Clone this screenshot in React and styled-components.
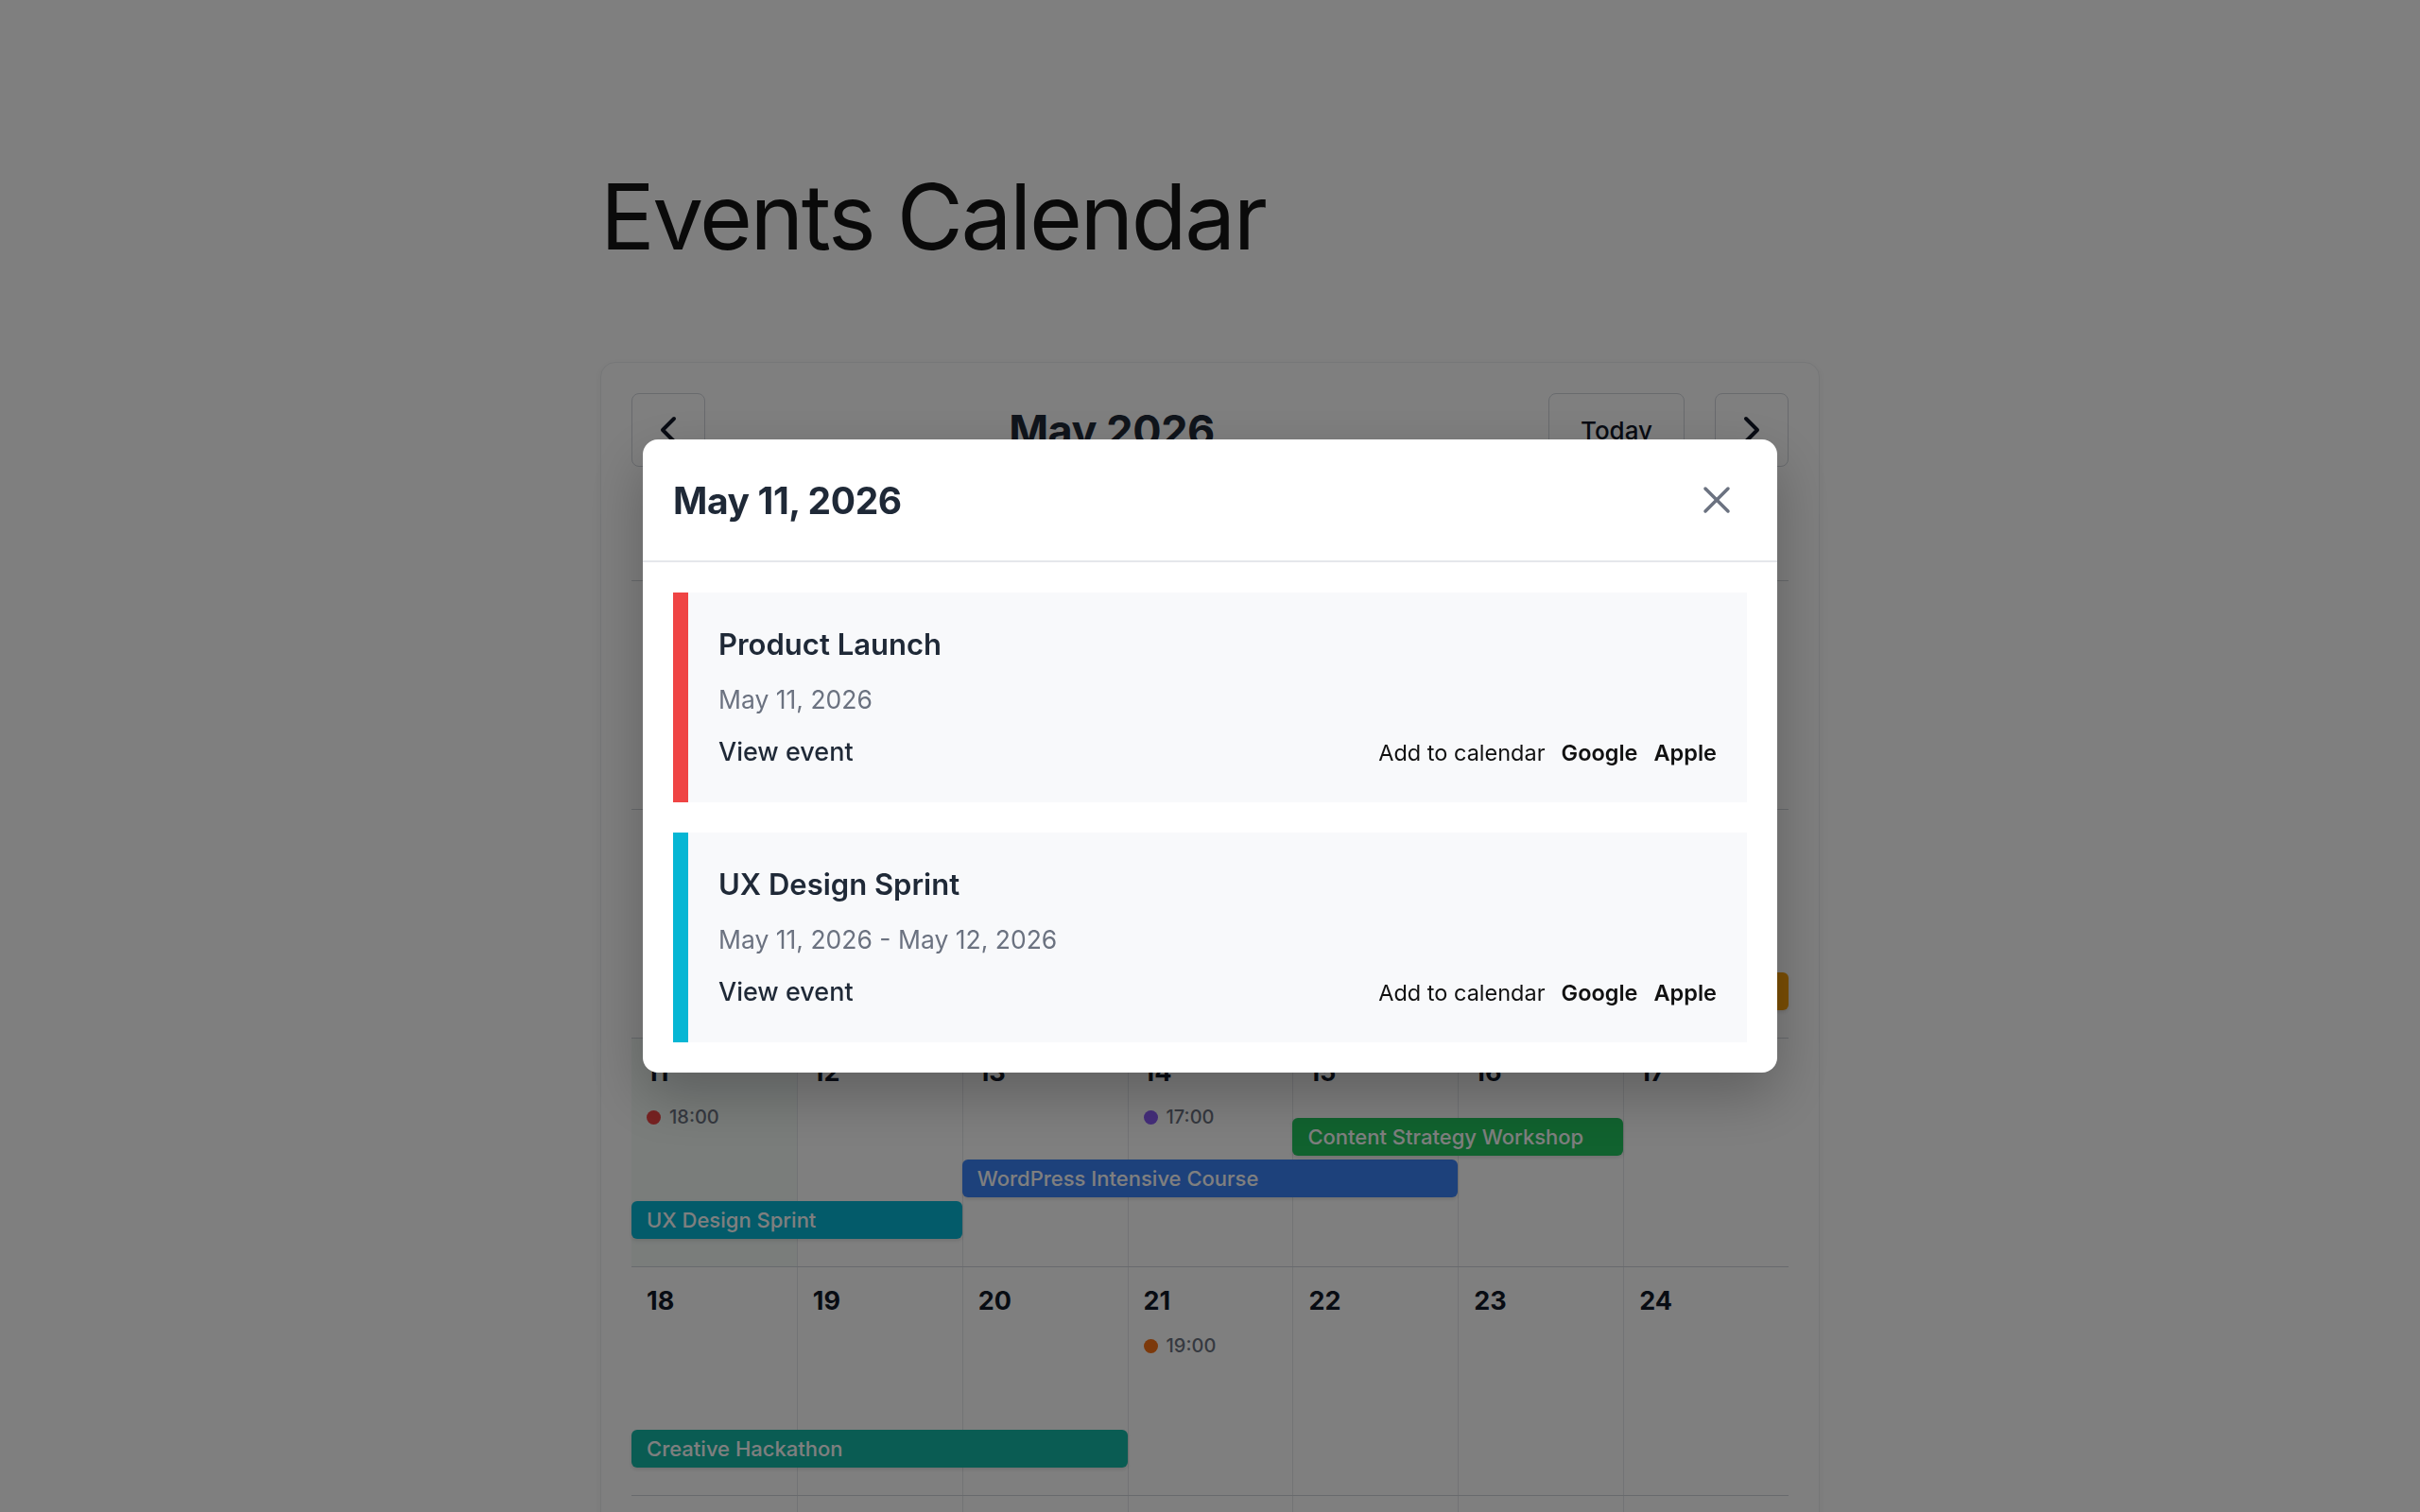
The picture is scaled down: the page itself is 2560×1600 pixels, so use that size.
import React, { useState } from 'react'
import styled, { createGlobalStyle } from 'styled-components'
import { ChevronLeft, ChevronRight, X } from 'lucide-react'

const GlobalStyle = createGlobalStyle`
    * {
        box-sizing: border-box;
    }
    body {
        margin: 0;
        background: #ffffff;
        font-family: Inter, 'Noto Sans', 'Liberation Sans', sans-serif;
        color: #1f2937;
    }
`

const Page = styled.div`
    width: 1290px;
    margin: 0 auto;
    padding: 172px 0 120px;
`

const PageTitle = styled.h1`
    margin: 0 0 96px;
    font-size: 96px;
    line-height: 1.2;
    font-weight: 400;
    letter-spacing: -0.025em;
    color: #141414;
`

const CalendarCard = styled.div`
    background: #ffffff;
    border: 1px solid #eceef1;
    border-radius: 16px;
    box-shadow: 0 2px 8px rgba(0, 0, 0, 0.06);
    padding: 32px;
`

const Nav = styled.div`
    display: flex;
    align-items: center;
    margin-bottom: 32px;
`

const NavButton = styled.button`
    height: 78px;
    min-width: 78px;
    padding: ${props => (props.wide ? '0 33px' : '0')};
    display: flex;
    align-items: center;
    justify-content: center;
    background: #ffffff;
    border: 1px solid #d1d5db;
    border-radius: 8px;
    color: #111827;
    font-family: inherit;
    font-size: 26px;
    font-weight: 500;
    cursor: pointer;
`

const MonthTitle = styled.h2`
    flex: 1;
    margin: 0;
    text-align: center;
    font-size: 45px;
    font-weight: 700;
    letter-spacing: -0.01em;
    color: #1f2937;
`

const NavActions = styled.div`
    display: flex;
    gap: 32px;
    margin-left: 32px;
`

const WeekdayRow = styled.div`
    display: grid;
    grid-template-columns: repeat(7, 1fr);
`

const Weekday = styled.div`
    padding: 24px 16px;
    line-height: 40px;
    font-size: 22px;
    font-weight: 600;
    color: #6b7280;
`

const Week = styled.div`
    display: grid;
    grid-template-columns: repeat(7, 1fr);
    grid-template-rows: 80px 40px 40px 40px 1fr;
    row-gap: 4px;
    height: 242px;
    border-top: 1px solid #d1d5db;
`

const DayCell = styled.div`
    grid-row: 1 / -1;
    grid-column: ${props => props.col};
    padding: 16px;
    border-left: ${props => (props.col > 1 ? '1px solid #e5e7eb' : 'none')};
    background: ${props => (props.active ? '#f4faf7' : 'transparent')};
`

const DayNumber = styled.div`
    font-size: 27px;
    line-height: 39px;
    font-weight: 700;
    color: ${props => (props.muted ? '#9ca3af' : '#111827')};
`

const TimedEvent = styled.div`
    display: flex;
    align-items: center;
    gap: 9px;
    margin-top: 13px;
    font-size: 20px;
    line-height: 30px;
    font-weight: 500;
    color: #6b7280;
`

const Dot = styled.span`
    width: 15px;
    height: 15px;
    border-radius: 50%;
    background: ${props => props.color};
`

const EventBar = styled.div`
    grid-column: ${props => props.start} / span ${props => props.span};
    grid-row: ${props => props.lane + 2};
    z-index: 1;
    height: 40px;
    padding: 0 16px;
    border-radius: 6px;
    background: ${props => props.color};
    box-shadow: 0 2px 4px rgba(0, 0, 0, 0.12);
    color: #ffffff;
    font-size: 22px;
    font-weight: 500;
    line-height: 40px;
    white-space: nowrap;
    overflow: hidden;
    text-overflow: ellipsis;
`

const Overlay = styled.div`
    position: fixed;
    inset: 0;
    z-index: 10;
    display: flex;
    align-items: center;
    justify-content: center;
    background: rgba(0, 0, 0, 0.5);
`

const Modal = styled.div`
    width: 1200px;
    background: #ffffff;
    border-radius: 16px;
    box-shadow: 0 24px 60px rgba(0, 0, 0, 0.25);
    overflow: hidden;
`

const ModalHeader = styled.div`
    display: flex;
    align-items: center;
    justify-content: space-between;
    padding: 32px;
    border-bottom: 2px solid #e5e7eb;
`

const ModalTitle = styled.h3`
    margin: 0;
    font-size: 39px;
    font-weight: 650;
    letter-spacing: -0.01em;
    color: #1f2937;
`

const CloseButton = styled.button`
    width: 64px;
    height: 64px;
    padding: 8px;
    border: none;
    background: transparent;
    color: #6b7280;
    cursor: pointer;
    display: flex;
    align-items: center;
    justify-content: center;
`

const ModalBody = styled.div`
    display: flex;
    flex-direction: column;
    gap: 32px;
    padding: 32px;
`

const EventCard = styled.div`
    background: #f8f9fb;
    border-left: 16px solid ${props => props.color};
    padding: 32px;
`

const EventTitle = styled.div`
    font-size: 31px;
    line-height: 45px;
    font-weight: 600;
    color: #1f2937;
`

const EventDate = styled.div`
    margin-top: 16px;
    font-size: 26.5px;
    line-height: 41px;
    color: #6b7280;
`

const EventFooter = styled.div`
    display: flex;
    align-items: center;
    justify-content: space-between;
    margin-top: 14px;
`

const ViewLink = styled.a`
    font-size: 27px;
    line-height: 42px;
    font-weight: 500;
    color: #1f2937;
    text-decoration: none;
`

const AddCalendar = styled.div`
    display: flex;
    align-items: center;
    gap: 17px;
    font-size: 23.5px;
    color: #111111;
`

const CalendarLink = styled.a`
    font-weight: 600;
    color: #111111;
    text-decoration: none;
`

const weekdays = ['Mon', 'Tue', 'Wed', 'Thu', 'Fri', 'Sat', 'Sun']

const weeks = [
    [27, 28, 29, 30, 1, 2, 3],
    [4, 5, 6, 7, 8, 9, 10],
    [11, 12, 13, 14, 15, 16, 17],
    [18, 19, 20, 21, 22, 23, 24],
    [25, 26, 27, 28, 29, 30, 31],
]

const timed = [
    { day: 11, time: '18:00', color: '#ef4444' },
    { day: 14, time: '17:00', color: '#8b5cf6' },
    { day: 21, time: '19:00', color: '#f97316' },
]

const spans = [
    { title: 'Design Conference', start: 8, end: 10, lane: 2, color: '#f59e0b' },
    { title: 'UX Design Sprint', start: 11, end: 12, lane: 2, color: '#06b6d4' },
    { title: 'WordPress Intensive Course', start: 13, end: 15, lane: 1, color: '#3b82f6' },
    { title: 'Content Strategy Workshop', start: 15, end: 16, lane: 0, color: '#22c55e' },
    { title: 'Creative Hackathon', start: 18, end: 20, lane: 2, color: '#14b8a6' },
]

const dayEvents = [
    { title: 'Product Launch', date: 'May 11, 2026', color: '#ef4444' },
    { title: 'UX Design Sprint', date: 'May 11, 2026 - May 12, 2026', color: '#06b6d4' },
]

const App = () => {
    const [selected, setSelected] = useState(11)
    const [open, setOpen] = useState(true)

    return (
        <>
            <GlobalStyle />
            <Page>
                <PageTitle>Events Calendar</PageTitle>
                <CalendarCard>
                    <Nav>
                        <NavButton aria-label="Previous month">
                            <ChevronLeft size={48} strokeWidth={2} />
                        </NavButton>
                        <MonthTitle>May 2026</MonthTitle>
                        <NavActions>
                            <NavButton wide>Today</NavButton>
                            <NavButton aria-label="Next month">
                                <ChevronRight size={48} strokeWidth={2} />
                            </NavButton>
                        </NavActions>
                    </Nav>
                    <WeekdayRow>
                        {weekdays.map(d => (
                            <Weekday key={d}>{d}</Weekday>
                        ))}
                    </WeekdayRow>
                    {weeks.map((week, wi) => (
                        <Week key={wi}>
                            {week.map((day, di) => {
                                const muted = wi === 0 && day > 20
                                return (
                                    <DayCell
                                        key={di}
                                        col={di + 1}
                                        active={!muted && day === selected}
                                        onClick={() => {
                                            setSelected(day)
                                            setOpen(true)
                                        }}
                                    >
                                        <DayNumber muted={muted}>{day}</DayNumber>
                                        {!muted &&
                                            timed
                                                .filter(t => t.day === day)
                                                .map(t => (
                                                    <TimedEvent key={t.time}>
                                                        <Dot color={t.color} />
                                                        {t.time}
                                                    </TimedEvent>
                                                ))}
                                    </DayCell>
                                )
                            })}
                            {wi > 0 &&
                                spans
                                    .filter(s => week.includes(s.start))
                                    .map(s => (
                                        <EventBar
                                            key={s.title}
                                            start={week.indexOf(s.start) + 1}
                                            span={s.end - s.start + 1}
                                            lane={s.lane}
                                            color={s.color}
                                        >
                                            {s.title}
                                        </EventBar>
                                    ))}
                        </Week>
                    ))}
                </CalendarCard>
            </Page>
            {open && (
                <Overlay>
                    <Modal>
                        <ModalHeader>
                            <ModalTitle>May 11, 2026</ModalTitle>
                            <CloseButton aria-label="Close" onClick={() => setOpen(false)}>
                                <X size={48} strokeWidth={1.75} />
                            </CloseButton>
                        </ModalHeader>
                        <ModalBody>
                            {dayEvents.map(ev => (
                                <EventCard key={ev.title} color={ev.color}>
                                    <EventTitle>{ev.title}</EventTitle>
                                    <EventDate>{ev.date}</EventDate>
                                    <EventFooter>
                                        <ViewLink href="#">View event</ViewLink>
                                        <AddCalendar>
                                            <span>Add to calendar</span>
                                            <CalendarLink href="#">Google</CalendarLink>
                                            <CalendarLink href="#">Apple</CalendarLink>
                                        </AddCalendar>
                                    </EventFooter>
                                </EventCard>
                            ))}
                        </ModalBody>
                    </Modal>
                </Overlay>
            )}
        </>
    )
}

export default App
